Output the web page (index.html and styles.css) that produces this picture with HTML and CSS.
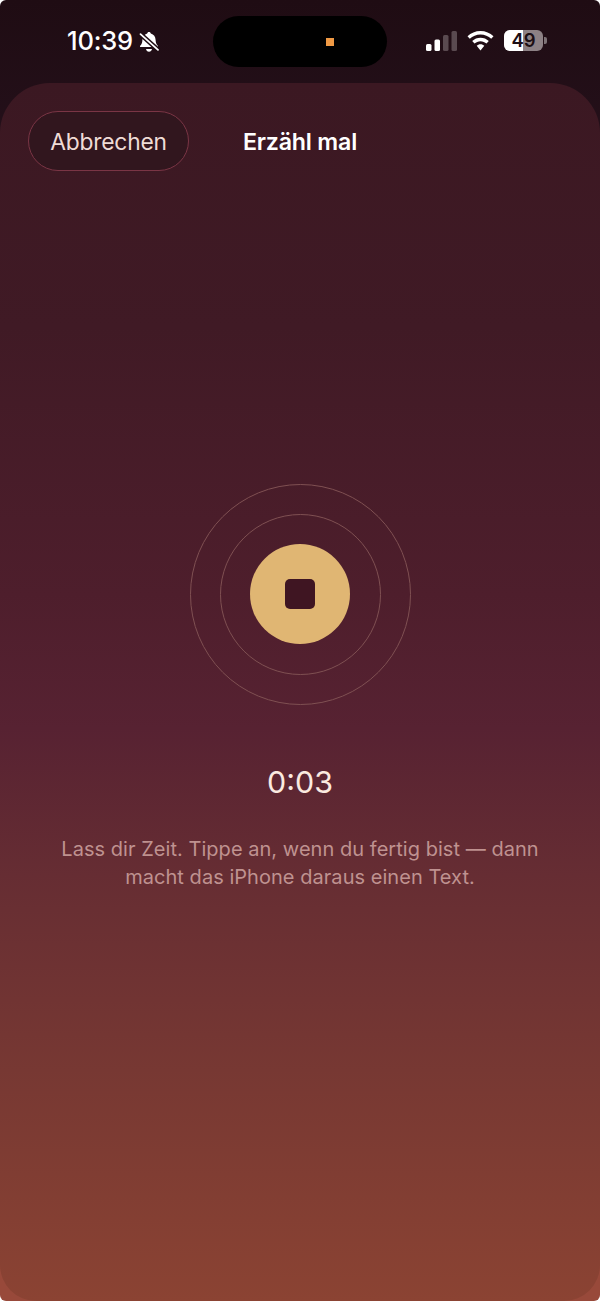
FILE: index.html
```html
<!DOCTYPE html>
<html lang="de">
<head>
<meta charset="utf-8">
<title>Erzähl mal</title>
<link rel="stylesheet" href="styles.css">
</head>
<body>
<div class="screen">
  <header class="status">
    <div class="status-left">
      <span class="clock">10:39</span>
      <svg class="bell" viewBox="0 0 22 22" width="22" height="22" aria-hidden="true">
        <path fill="#fff" d="M11 1c1 0 1.700.7 1.800 1.600 3 .8 4.700 3.300 4.800 6.400.1 2.800.9 4.500 2.200 5.700.5.500.2 1.300-.5 1.300H2.700c-.7 0-1-.8-.5-1.300 1.300-1.200 2.100-2.900 2.200-5.700.1-3.100 1.800-5.600 4.800-6.400C9.300 1.700 10 1 11 1zM8 18h6c-.2 1.600-1.500 2.800-3 2.800S8.200 19.600 8 18z"/>
        <path stroke="#1f0c13" stroke-width="4.600" d="M1 1.800 21 19.800"/>
        <path stroke="#fff" stroke-width="1.800" stroke-linecap="round" d="M2.500 3.200 20 18.900"/>
      </svg>
    </div>
    <div class="island"><span class="island-dot"></span></div>
    <div class="status-right">
      <svg class="signal" viewBox="0 0 31 20" width="31" height="20" aria-hidden="true">
        <rect class="bar-on" x="0" y="13" width="5.500" height="7" rx="1.500"/>
        <rect class="bar-on" x="8.500" y="8.500" width="5.500" height="11.500" rx="1.500"/>
        <rect class="bar-off" x="17" y="4" width="5.500" height="16" rx="1.500"/>
        <rect class="bar-off" x="25.500" y="0" width="5.500" height="20" rx="1.500"/>
      </svg>
      <svg class="wifi" viewBox="0 0 27 20" width="27" height="20" aria-hidden="true">
        <path fill="#fff" d="M13.500 0c5 0 9.600 2 13 5.200l-2.300 2.600c-2.800-2.600-6.600-4.200-10.700-4.200S5.600 5.200 2.800 7.800L.5 5.200C3.900 2 8.500 0 13.500 0zM13.500 6.700c3.200 0 6.100 1.200 8.300 3.300l-2.300 2.600c-1.600-1.500-3.700-2.400-6-2.400s-4.400.9-6 2.400L5.200 10c2.200-2.100 5.100-3.300 8.300-3.300zM13.500 13.300c1.500 0 2.800.6 3.800 1.500l-3.800 4.700-3.800-4.700c1-.9 2.300-1.500 3.800-1.500z"/>
      </svg>
      <div class="battery">
        <div class="battery-body"><span class="battery-fill"></span><span class="battery-num">49</span></div>
        <span class="battery-cap"></span>
      </div>
    </div>
  </header>
  <main class="sheet">
    <div class="topbar">
      <button class="cancel" type="button">Abbrechen</button>
      <h1 class="title">Erzähl mal</h1>
    </div>
    <section class="recorder">
      <div class="rings">
        <span class="ring ring-outer"></span>
        <span class="ring ring-inner"></span>
        <span class="stop-button"><span class="stop-icon"></span></span>
      </div>
      <div class="timer">0:03</div>
      <p class="hint">Lass dir Zeit. Tippe an, wenn du fertig bist — dann<br>macht das iPhone daraus einen Text.</p>
    </section>
  </main>
</div>
</body>
</html>
```
FILE: styles.css
```css
* { box-sizing: border-box; }
html, body { margin: 0; padding: 0; background: #fff; }
body { font-family: Inter, "Noto Sans", "Liberation Sans", sans-serif; }

.screen {
  width: 600px;
  height: 1301px;
  display: flex;
  flex-direction: column;
  overflow: hidden;
  border-radius: 6px;
  background: linear-gradient(180deg, #1f0c13 0, #24101a 140px, #24101a 200px, #98493a 1265px);
  color: #fff;
}

.status {
  height: 83px;
  flex: none;
  display: grid;
  grid-template-columns: 1fr 174px 1fr;
  padding-top: 16px;
  align-items: start;
}
.status-left {
  display: flex;
  align-items: center;
  gap: 3px;
  height: 49px;
  padding-left: 67px;
}
.clock { font-size: 25.5px; font-weight: 550; letter-spacing: -0.2px; }
.bell { display: block; margin: 2px 0 0 2px; }
.island {
  height: 51px;
  border-radius: 26px;
  background: #000;
  display: flex;
  align-items: center;
  justify-content: flex-end;
  padding-right: 53px;
}
.island-dot { width: 8px; height: 8px; background: #f09a45; }
.status-right {
  display: flex;
  align-items: center;
  gap: 10px;
  height: 49px;
  padding-left: 39px;
}
.signal, .wifi { display: block; }
.bar-on { fill: #fff; }
.bar-off { fill: #5a4a50; }
.battery { display: flex; align-items: center; gap: 1px; }
.battery-body {
  position: relative;
  width: 39px;
  height: 21px;
  border-radius: 6px;
  overflow: hidden;
  background: #8d8185;
  display: flex;
  align-items: center;
  justify-content: center;
}
.battery-fill { position: absolute; left: 0; top: 0; bottom: 0; width: 49%; background: #fff; }
.battery-num { position: relative; color: #1c0e14; font-size: 18.5px; font-weight: 600; line-height: 1; }
.battery-cap { width: 2.5px; height: 7px; border-radius: 0 2px 2px 0; background: #7d7276; }

.sheet {
  flex: 1;
  display: flex;
  flex-direction: column;
  border-radius: 50px 50px 36px 36px;
  background: linear-gradient(180deg, #3b1822 0%, #401a25 20%, #4e1e2c 42%, #572232 53%, #662d33 65%, #773833 81%, #8b4333 100%);
}

.topbar {
  position: relative;
  height: 88px;
  margin-top: 28px;
  padding-left: 28px;
}
.cancel {
  width: 161px;
  height: 60px;
  border-radius: 30px;
  border: 1px solid #7a3545;
  background: #31161e;
  color: #efdcd6;
  font: 400 22.8px Inter, "Noto Sans", sans-serif;
  letter-spacing: -0.2px;
  padding: 1px 0 0;
}
.title {
  position: absolute;
  left: 0;
  right: 0;
  top: 1px;
  height: 60px;
  margin: 0;
  text-align: center;
  line-height: 60px;
  font-size: 23.2px;
  font-weight: 600;
  color: #fff;
  letter-spacing: -0.2px;
}

.recorder {
  display: flex;
  flex-direction: column;
  align-items: center;
  padding-top: 284.5px;
}
.rings {
  display: grid;
  width: 221px;
  height: 221px;
  place-items: center;
}
.rings > * { grid-area: 1 / 1; }
.ring { display: block; border-radius: 50%; border: 1px solid #7f5052; }
.ring-outer { width: 221px; height: 221px; }
.ring-inner { width: 161px; height: 161px; }
.stop-button {
  width: 100px;
  height: 100px;
  border-radius: 50%;
  background: #e0b673;
  display: flex;
  align-items: center;
  justify-content: center;
}
.stop-icon { width: 30px; height: 30px; border-radius: 5px; background: #3f1522; }

.timer {
  margin-top: 57.5px;
  height: 40px;
  font-size: 30.4px;
  line-height: 40px;
  font-weight: 400;
  color: #fbeae0;
}
.hint {
  margin: 33px 0 0;
  text-align: center;
  font-size: 20px;
  letter-spacing: 0.04px;
  line-height: 28px;
  color: #bf9290;
}
```
